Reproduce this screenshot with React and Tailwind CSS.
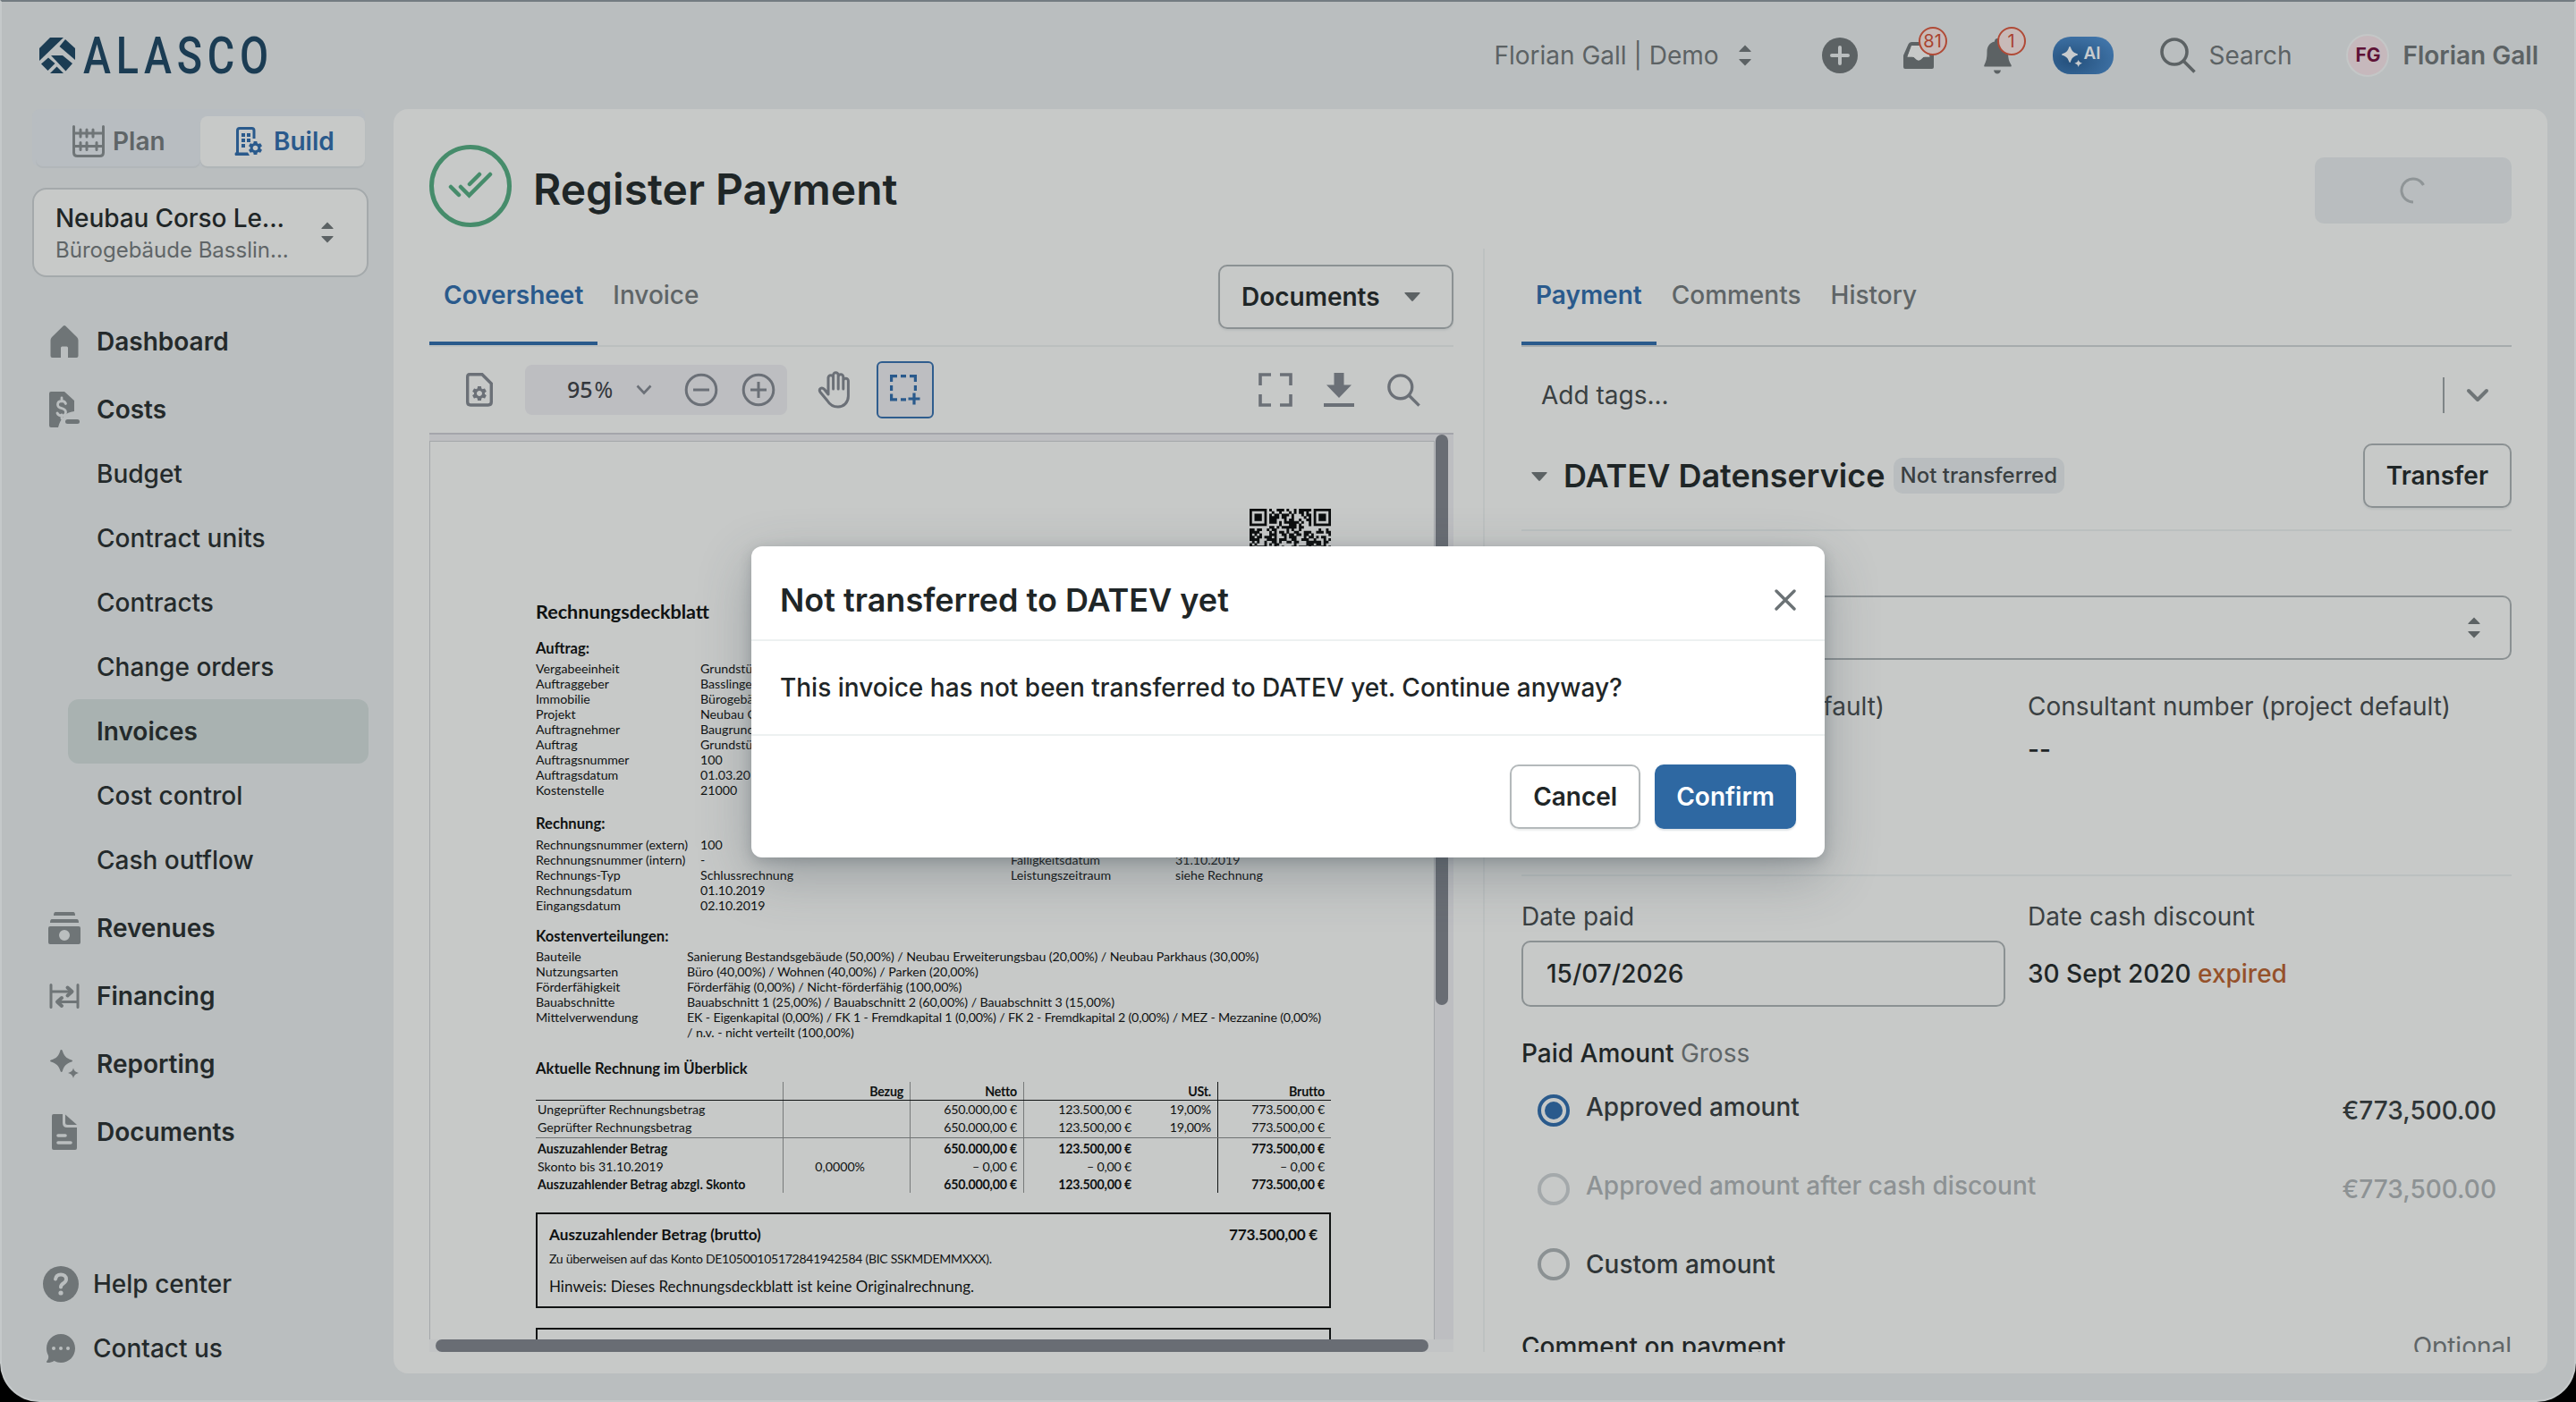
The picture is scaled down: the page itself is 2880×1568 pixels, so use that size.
import { MdSettings } from 'react-icons/md';
import clsx from 'clsx';

const subItems = ['Budget', 'Contract units', 'Contracts', 'Change orders', 'Invoices', 'Cost control', 'Cash outflow'];

const orderRows = [
  ['Vergabeeinheit', 'Grundstückskosten'],
  ['Auftraggeber', 'Basslinger Immobilien GmbH'],
  ['Immobilie', 'Bürogebäude Basslingerstraße'],
  ['Projekt', 'Neubau Corso Leopold'],
  ['Auftragnehmer', 'Baugrund GmbH'],
  ['Auftrag', 'Grundstückskosten'],
  ['Auftragsnummer', '100'],
  ['Auftragsdatum', '01.03.2019'],
  ['Kostenstelle', '21000'],
];

const invoiceRows = [
  ['Rechnungsnummer (extern)', '100', '', ''],
  ['Rechnungsnummer (intern)', '-', 'Fälligkeitsdatum', '31.10.2019'],
  ['Rechnungs-Typ', 'Schlussrechnung', 'Leistungszeitraum', 'siehe Rechnung'],
  ['Rechnungsdatum', '01.10.2019', '', ''],
  ['Eingangsdatum', '02.10.2019', '', ''],
];

const costRows = [
  ['Bauteile', 'Sanierung Bestandsgebäude (50,00%) / Neubau Erweiterungsbau (20,00%) / Neubau Parkhaus (30,00%)'],
  ['Nutzungsarten', 'Büro (40,00%) / Wohnen (40,00%) / Parken (20,00%)'],
  ['Förderfähigkeit', 'Förderfähig (0,00%) / Nicht-förderfähig (100,00%)'],
  ['Bauabschnitte', 'Bauabschnitt 1 (25,00%) / Bauabschnitt 2 (60,00%) / Bauabschnitt 3 (15,00%)'],
  ['Mittelverwendung', 'EK - Eigenkapital (0,00%) / FK 1 - Fremdkapital 1 (0,00%) / FK 2 - Fremdkapital 2 (0,00%) / MEZ - Mezzanine (0,00%)'],
  ['', '/ n.v. - nicht verteilt (100,00%)'],
];

const amountRows = [
  { cells: ['', 'Bezug', 'Netto', '', 'USt.', 'Brutto'], cls: 'h-5 font-bold' },
  { cells: ['Ungeprüfter Rechnungsbetrag', '', '650.000,00 €', '123.500,00 €', '19,00%', '773.500,00 €'], cls: 'h-5 border-t border-[#111414]' },
  { cells: ['Geprüfter Rechnungsbetrag', '', '650.000,00 €', '123.500,00 €', '19,00%', '773.500,00 €'], cls: 'h-[22px]', cellCls: 'pb-0.5' },
  { cells: ['Auszuzahlender Betrag', '', '650.000,00 €', '123.500,00 €', '', '773.500,00 €'], cls: 'h-[22px] border-t border-[#707373] font-bold', cellCls: 'pt-0.5' },
  { cells: ['Skonto bis 31.10.2019', '0,0000%', '– 0,00 €', '– 0,00 €', '', '– 0,00 €'], cls: 'h-5' },
  { cells: ['Auszuzahlender Betrag abzgl. Skonto', '', '650.000,00 €', '123.500,00 €', '', '773.500,00 €'], cls: 'h-5 font-bold' },
];

function SortArrows({ className }) {
  return (
    <svg viewBox="0 0 14 24" className={clsx('h-6 w-3.5 shrink-0 fill-[#5c6264]', className)}>
      <path d="M7 0.5 13.6 7.2q.4.8-.6.8H1q-1 0-.6-.8zM7 23.5l6.6-6.700q.4-.8-.6-.8H1q-1 0-.6.8z" />
    </svg>
  );
}

function Caret({ className }) {
  return (
    <svg viewBox="0 0 18 10" className={clsx('h-2.5 w-[18px] shrink-0 fill-[#5c6264]', className)}>
      <path d="M1.200 0h15.600q1.600 0 .7 1L9.800 9.500q-.8.8-1.600 0L.5 1q-.9-1 .7-1z" />
    </svg>
  );
}

function Logo() {
  return (
    <svg viewBox="0 0 270 44" className="h-11 w-[270px] overflow-visible fill-[#1b3c53]">
      <path d="M0 14 12 2h15L0 28z" />
      <path d="M29 4 40 14v13L22.500 12z" />
      <path d="M13 22h13l11 9-7.500 8.500z" />
      <path d="M10 24.500l7.500 6.500-8 8L2 31.500z" />
      <path d="M19.500 34.500 27 42H12z" />
      <text x="49" y="42" fontSize="56.500" fontWeight="500" letterSpacing="7" textLength="213" lengthAdjust="spacingAndGlyphs" fontFamily="Roboto, sans-serif">
        ALASCO
      </text>
    </svg>
  );
}

function PlanIcon() {
  return (
    <svg viewBox="0 0 36 36" className="size-9" fill="none" stroke="#6f7577" strokeWidth="3" strokeLinecap="round">
      <path d="M1.500 1.500v29q0 4 4 4h25q4 0 4-4v-29M1.500 9h33M1.500 23.500h33" />
      <path d="M9 5v8M16 5v8M23 5v8M9 19.500v8M16 19.500v8M27 19.500v8" />
    </svg>
  );
}

function BuildIcon() {
  return (
    <svg viewBox="0 0 32 32" className="size-8 fill-[#2a5a8c]">
      <path d="M3.500 30V4q0-2.500 2.500-2.500h13.500q2.500 0 2.500 2.500v9" fill="none" stroke="#2a5a8c" strokeWidth="3" />
      <path d="M1 28.500h14l2 3.500H1q-1-1.700 0-3.500z" />
      <path d="M8 7h4v4H8zM14 7h4v4h-4zM8 13h4v4H8zM14 13h4v4h-4zM8 19h4v4H8z" />
      <MdSettings x="14" y="14" size="19" />
    </svg>
  );
}

function HomeIcon() {
  return (
    <svg viewBox="0 0 32 36" className="h-9 w-8 fill-[#6f7577]">
      <path d="M14.500.7q1.500-1.400 3 0L30 13q1.500 1.500 1.500 3.500V34q0 2-2 2H20V25q0-1.500-1.500-1.500h-5Q12 23.500 12 25v11H2.500q-2 0-2-2V16.500q0-2 1.500-3.500z" />
    </svg>
  );
}

function CostsIcon() {
  return (
    <svg viewBox="0 0 34 40" className="h-10 w-[34px]">
      <path d="M2 0h15l11 10v12q-8 1-11 5-5 5-7 13H2q-2 0-2-2V2q0-2 2-2z" fill="#6f7577" />
      <path d="M18.500 13.500q-1-3-4.500-3-4.500.2-4.500 4 0 3 4.500 4.200t4.500 4.300q0 3.800-4.500 4-3.500 0-5-3M14 7v3.500M14 26v4" fill="none" stroke="#babebf" strokeWidth="2.800" strokeLinecap="round" />
      <rect x="18" y="31" width="16" height="5" rx="2.500" fill="#6f7577" />
    </svg>
  );
}

function RevenuesIcon() {
  return (
    <svg viewBox="0 0 36 36" className="size-9 fill-[#6f7577]">
      <path d="M8 0h20q2 0 2 4H6q0-4 2-4zM4 8h28q2 0 2 4H2q0-4 2-4z" />
      <path fillRule="evenodd" d="M2 16h32q2 0 2 2v16q0 2-2 2H2q-2 0-2-2V18q0-2 2-2zm16 4a6 6 0 1 0 0 12 6 6 0 1 0 0-12z" />
    </svg>
  );
}

function FinancingIcon() {
  return (
    <svg viewBox="0 0 34 28" className="h-7 w-[34px]" fill="none" stroke="#6f7577" strokeWidth="3" strokeLinecap="round" strokeLinejoin="round">
      <path d="M2 1.500v25M32 1.500v25M3 9h22M31 20.500H10" />
      <path d="M20.500 4.500 25.500 9l-5 4.500M14 16l-5 4.500 5 4.500" strokeWidth="4" />
    </svg>
  );
}

function Sparkles({ className }) {
  return (
    <svg viewBox="0 0 32 32" className={className}>
      <path d="M12.500 0c.7 0 1 .5 1.300 1.200 2 6 4 8.100 10.300 10.300 1.300.5 1.300 1.500 0 2C17.800 15.700 15.800 17.800 13.800 24c-.4 1.300-1.800 1.300-2.200 0C9.500 17.800 7.500 15.700 1 13.500c-1.300-.5-1.300-1.500 0-2C7.500 9.300 9.500 7.200 11.300 1.200 11.500.5 11.800 0 12.500 0z" />
      <path d="M26 20.500c.9 3 2 4.200 6 5.500-4 1.300-5.100 2.500-6 6-.9-3.500-2-4.700-6-6 4-1.300 5.100-2.500 6-5.500z" />
    </svg>
  );
}

function DocumentsIcon() {
  return (
    <svg viewBox="0 0 28 40" className="h-10 w-7">
      <path d="M2 0h10v10q0 5 5 5h11v23q0 2-2 2H2q-2 0-2-2V2q0-2 2-2z" fill="#6f7577" />
      <path d="M15 0.500 28 12H17.500Q15 12 15 9.500z" fill="#6f7577" />
      <path d="M7 24h8M7 32h14" stroke="#babebf" strokeWidth="3.600" strokeLinecap="round" />
    </svg>
  );
}

function HelpIcon() {
  return (
    <svg viewBox="0 0 40 40" className="size-10">
      <circle cx="20" cy="20" r="20" fill="#6f7577" />
      <path d="M14 14.500c.6-3.500 3-5 6-5 3.500 0 6 2 6 5.200 0 4.800-6 4.300-6 8.800" fill="none" stroke="#babebf" strokeWidth="4" strokeLinecap="round" />
      <circle cx="20" cy="30" r="2.600" fill="#babebf" />
    </svg>
  );
}

function ChatIcon() {
  return (
    <svg viewBox="0 0 32 32" className="size-8">
      <path d="M16 0c9 0 16 7 16 16s-7 16-16 16c-3 0-5-.8-7.500-2C6 31.500 4 32 1.500 32 0 32-.4 31 .5 30c1.500-2 2-3.500 1.500-6C.7 21.500 0 19 0 16 0 7 7 0 16 0z" fill="#6f7577" />
      <g fill="#babebf">
        <circle cx="8" cy="16" r="2" />
        <circle cx="16" cy="16" r="2" />
        <circle cx="24" cy="16" r="2" />
      </g>
    </svg>
  );
}

function SearchIcon({ className, strokeWidth = 4 }) {
  return (
    <svg viewBox="0 0 40 40" className={className} fill="none" strokeWidth={strokeWidth}>
      <circle cx="16" cy="16" r="14" />
      <path d="M26 26 38.500 38.500" />
    </svg>
  );
}

function HandIcon({ className }) {
  return (
    <svg viewBox="0 0 38 42" className={className} fill="none" stroke="#6b7077" strokeWidth="3" strokeLinecap="round" strokeLinejoin="round">
      <path d="M12 26V7.500a2.800 2.800 0 0 1 5.600 0V20M17.600 20V4.500a2.800 2.800 0 0 1 5.600 0V20M23.200 20V6.500a2.800 2.800 0 0 1 5.600 0V20M28.800 20v-9a2.800 2.800 0 0 1 5.600 0v17c0 7-5 12-11.500 12-5.500 0-9-2-12-7L3 23.500c-2-3.500 1.500-6 4.500-3.200L12 26" />
    </svg>
  );
}

const navItems = [
  { label: 'Dashboard', icon: HomeIcon },
  { label: 'Costs', icon: CostsIcon, children: subItems },
  { label: 'Revenues', icon: RevenuesIcon },
  { label: 'Financing', icon: FinancingIcon },
  { label: 'Reporting', icon: () => <Sparkles className="size-8 fill-[#6f7577]" /> },
  { label: 'Documents', icon: DocumentsIcon },
];

function Header() {
  return (
    <header className="flex h-[120px] shrink-0 items-center pr-10 pl-[42px] text-[#5c6264]">
      <Logo />
      <span className="ml-auto">Florian Gall | Demo</span>
      <SortArrows className="ml-[22px]" />
      <svg viewBox="0 0 40 40" className="ml-[79px] size-10">
        <circle cx="20" cy="20" r="20" fill="#5c6264" />
        <path d="M20 11v18M11 20h18" stroke="#babebf" strokeWidth="4" strokeLinecap="round" />
      </svg>
      <div className="relative ml-[51px]">
        <svg viewBox="0 0 34 30" className="h-[30px] w-[34px]">
          <path fillRule="evenodd" fill="#5c6264" d="M9 0h16q2.500 0 3.500 2.500L34 15v13q0 2-2 2H2q-2 0-2-2V15L5.500 2.500Q6.500 0 9 0zm0 4L4.500 16.500H10q2 0 3.500 2t3.500 2 3.500-2 3.500-2h5.500L25 4z" />
          <path fill="#c7c9c8" d="M9.500 4 4.500 16.500H10q2 0 3.500 2t3.500 2 3.500-2 3.500-2h5.500L24.500 4z" />
        </svg>
        <span className="absolute -top-[17px] left-[17px] flex size-8 items-center justify-center rounded-full border-2 border-[#b04a36] bg-[#c8bab8] text-xl leading-none text-[#a8432f]">81</span>
      </div>
      <div className="relative ml-[54px]">
        <svg viewBox="0 0 34 42" className="h-[42px] w-[34px] fill-[#5c6264]">
          <path d="M17 2c2 0 3 1.500 3 3.500 6 1 9 5.500 9 11.500 0 7 1 10.500 3.500 14.500.5 1.500.5 2-1 2h-28c-1.500 0-1.500-.5-1-2C4.500 27.500 5.500 24 5.500 17c0-6 3-10.500 8.500-11.500C14 3.500 15 2 17 2zM13 37.500h8q-.8 4-4 4t-4-4z" />
        </svg>
        <span className="absolute -top-[11px] left-[17px] flex size-8 items-center justify-center rounded-full border-2 border-[#b04a36] bg-[#c8bab8] text-xl leading-none text-[#a8432f]">1</span>
      </div>
      <div className="ml-[45px] flex h-[42px] w-[68px] items-start rounded-[20px] bg-radial-[at_30%_65%] from-[#24507c] to-[#4378ad] to-90% pt-[11px] pl-2.5">
        <Sparkles className="h-[23px] w-[23px] fill-[#c7cbce]" />
        <span className="ml-0.5 text-[19px] leading-[15px] font-semibold text-[#c7cbce]">AI</span>
      </div>
      <SearchIcon className="ml-[52px] size-10 stroke-[#5c6264]" strokeWidth={3.600} />
      <span className="ml-[15px]">Search</span>
      <div className="ml-[61px] flex size-12 items-center justify-center rounded-full border-2 border-[#c4c7c7] bg-[#c6b8bc] text-[21px] font-bold text-[#5f1236]">FG</div>
      <span className="ml-[15px] font-semibold">Florian Gall</span>
    </header>
  );
}

function Sidebar() {
  return (
    <aside className="flex w-[438px] shrink-0 flex-col">
      <div className="ml-[34px] flex w-[372px] rounded-lg bg-[#b8bdc1] pt-2 pl-1 font-semibold">
        <div className="flex h-14 w-[184px] items-center rounded-lg pl-[41px] text-[#5f6567] shadow-[0_2px_0_#b1b6b9]">
          <PlanIcon />
          <span className="ml-[9px]">Plan</span>
        </div>
        <div className="flex h-14 w-[184px] items-center rounded-lg bg-[#c7c9c8] pl-[38px] text-[#2a5a8c] shadow-[0_2px_1px_#b0b5b7]">
          <BuildIcon />
          <span className="ml-3">Build</span>
        </div>
      </div>

      <div className="mt-6 ml-[34px] flex h-[100px] w-[376px] items-center rounded-2xl border-2 border-[#a4a9ab] bg-[#c7c9c8] pl-6">
        <div className="w-[297px] pt-[3px] whitespace-nowrap">
          <div className="leading-9 font-medium tracking-[-0.1px] text-[#1f2627]">Neubau Corso Le...</div>
          <div className="text-2xl leading-9 text-[#5f6567]">Bürogebäude Basslin...</div>
        </div>
        <SortArrows />
      </div>

      <nav className="mt-[34px] text-[#242a2b]">
        {navItems.map(({ label, icon: Icon, children }) => (
          <div key={label}>
            <div className="flex h-[76px] items-center font-semibold">
              <div className="mr-3 ml-[46px] flex w-12 justify-center">
                <Icon />
              </div>
              {label}
            </div>
            {children && (
              <div className="-mt-0.5 mb-0.5">
                {children.map((item) => (
                  <div
                    key={item}
                    className={clsx(
                      'ml-[74px] flex h-[72px] w-[336px] items-center rounded-xl pl-8',
                      item === 'Invoices' ? 'bg-[#a9b2b1] font-semibold' : 'font-medium'
                    )}
                  >
                    {item}
                  </div>
                ))}
              </div>
            )}
          </div>
        ))}
      </nav>

      <div className="mt-auto mb-[22px] font-medium text-[#242a2b]">
        <div className="flex h-[72px] items-center pl-[46px]">
          <HelpIcon />
          <span className="ml-4">Help center</span>
        </div>
        <div className="flex h-[72px] items-center pl-[50px]">
          <ChatIcon />
          <span className="ml-5">Contact us</span>
        </div>
      </div>
    </aside>
  );
}

function Tabs({ items }) {
  return (
    <div className="flex gap-px">
      {items.map((item, i) => (
        <div
          key={item}
          className={clsx(
            'h-[108px] border-b-4 px-4 pt-8 leading-10',
            i === 0 ? 'border-[#2a5a8c] font-semibold text-[#2a5a8c]' : 'border-transparent font-medium text-[#5f6567]'
          )}
        >
          {item}
        </div>
      ))}
    </div>
  );
}

function ViewerToolbar() {
  return (
    <div className="flex h-24 items-center">
      <svg viewBox="0 0 30 38" className="ml-[41px] h-[38px] w-[30px] text-[#6b7077]">
        <path d="M4 1.700h14L28.300 12v20.500q0 3.500-3.500 3.500H5q-3.300 0-3.300-3.500V4.500Q1.700 1.700 4 1.700z" fill="none" stroke="#6b7077" strokeWidth="3.400" />
        <MdSettings x="5" y="13" size="20" />
      </svg>
      <div className="ml-9 flex h-14 w-[293px] items-center rounded-lg bg-[#bdbec1] pl-[47px]">
        <span className="w-[77px] font-['Noto_Sans',sans-serif] text-[25px] font-medium text-[#34383d]">
          95<span className="ml-0.5 font-normal">%</span>
        </span>
        <svg viewBox="0 0 18 12" className="h-3 w-[18px]" fill="none" stroke="#6b7077" strokeWidth="2.600">
          <path d="M1.500 1.500 9 9.500l7.500-8" />
        </svg>
        <svg viewBox="0 0 38 38" className="ml-9 size-[38px]" fill="none" stroke="#6b7077" strokeWidth="3">
          <circle cx="19" cy="19" r="16.800" />
          <path d="M10 19h18" />
        </svg>
        <svg viewBox="0 0 38 38" className="ml-[26px] size-[38px]" fill="none" stroke="#6b7077" strokeWidth="3">
          <circle cx="19" cy="19" r="16.800" />
          <path d="M10 19h18M19 10v18" />
        </svg>
      </div>
      <HandIcon className="ml-[34px] h-[42px] w-[38px]" />
      <div className="ml-7 flex size-16 items-center justify-center rounded-md border-2 border-[#2f5d8e] bg-[#bdbec1]">
        <svg viewBox="0 0 34 34" className="size-[34px]" fill="none" stroke="#2a5a8c" strokeWidth="3.200">
          <path d="M1.600 8V1.600H8M12 1.600h6M22 1.600h6.400V8M28.400 12v6M1.600 12v6M1.600 21.500v6.400H8M12 27.900h6M27 20.500v13M20.500 27h13" />
        </svg>
      </div>
      <svg viewBox="0 0 38 38" className="ml-auto size-[38px]" fill="none" stroke="#6b7077" strokeWidth="3.600">
        <path d="M2 14V2h12M24 2h12v12M36 24v12H24M14 36H2V24" />
      </svg>
      <svg viewBox="0 0 34 38" className="ml-[35px] h-[38px] w-[34px] fill-[#6b7077]">
        <path d="M11.500 0h11v13.500H31L17 28 3 13.500h8.500zM0 34h34v4H0z" />
      </svg>
      <SearchIcon className="mr-[37px] ml-[37px] size-[37px] stroke-[#6b7077]" strokeWidth={3.600} />
    </div>
  );
}

const QR_SIZE = 33;

// Square code block with three finder marks and a fixed pseudo random fill
function QrCode() {
  const cells = [];
  let seed = 20191031;
  for (let y = 0; y < QR_SIZE; y++) {
    for (let x = 0; x < QR_SIZE; x++) {
      seed = (seed * 1103515245 + 12345) % 2147483648;
      const inFinder = (x < 8 && y < 8) || (x > 24 && y < 8) || (x < 8 && y > 24);
      if (!inFinder && (seed >> 12) % 100 < 52) cells.push(`M${x} ${y}h1.050v1.050h-1.050z`);
    }
  }
  return (
    <svg viewBox="0 0 33 33" className="size-[91px] fill-[#0c0e0e]">
      <path d={cells.join('')} />
      {[[0, 0], [26, 0], [0, 26]].map(([x, y]) => (
        <g key={`${x}-${y}`}>
          <rect x={x + 0.5} y={y + 0.5} width="6" height="6" fill="none" stroke="#0c0e0e" />
          <rect x={x + 2} y={y + 2} width="3" height="3" />
        </g>
      ))}
    </svg>
  );
}

function SheetHeading({ className, children }) {
  return <h3 className={clsx('text-[16.600px] leading-[22px] font-bold', className)}>{children}</h3>;
}

function Coversheet() {
  return (
    <div className="w-[1124px] shrink-0 overflow-hidden border-x border-t border-[#a4a7aa] bg-[#c7c9c8] pr-[115px] pl-[118px] font-[Lato,sans-serif] text-[14.200px] leading-[17px] whitespace-nowrap text-[#0f1212]">
      <div className="flex h-[176px] justify-end pt-[75px]">
        <QrCode />
      </div>
      <h2 className="text-[21.600px] leading-7 font-bold">Rechnungsdeckblatt</h2>

      <SheetHeading className="mt-4">Auftrag:</SheetHeading>
      <div className="mt-[3px]">
        {orderRows.map(([label, value]) => (
          <div key={label} className="flex">
            <span className="w-[184px]">{label}</span>
            <span>{value}</span>
          </div>
        ))}
      </div>

      <SheetHeading className="mt-[18px]">Rechnung:</SheetHeading>
      <div className="mt-1">
        {invoiceRows.map(([label, value, label2, value2]) => (
          <div key={label} className="flex">
            <span className="w-[184px]">{label}</span>
            <span className="w-[347px]">{value}</span>
            <span className="w-[184px]">{label2}</span>
            <span>{value2}</span>
          </div>
        ))}
      </div>

      <SheetHeading className="mt-[15px]">Kostenverteilungen:</SheetHeading>
      <div className="mt-[3px]">
        {costRows.map(([label, value]) => (
          <div key={value} className="flex h-[17px]">
            <span className="w-[169px] shrink-0">{label}</span>
            <span className={label === 'Mittelverwendung' ? 'tracking-[-0.15px]' : 'tracking-[-0.07px]'}>{value}</span>
          </div>
        ))}
      </div>

      <SheetHeading className="mt-[21px]">Aktuelle Rechnung im Überblick</SheetHeading>
      <div className="mt-1">
        {amountRows.map(({ cells, cls, cellCls }) => (
          <div key={cells.join()} className={clsx('grid grid-cols-[277px_142px_127px_127px_90px_126px]', cls)}>
            {cells.map((cell, i) => (
              <span
                key={i}
                className={clsx(
                  'flex items-center',
                  cellCls,
                  i === 0 ? 'pl-0.5' : 'justify-end',
                  i > 0 && (cell === '0,0000%' ? 'pr-[50px]' : 'pr-[7px] tracking-[-0.2px]'),
                  i < 3 && 'border-r border-[#777a7a]',
                  i === 4 && 'border-r border-[#111414]'
                )}
              >
                {cell}
              </span>
            ))}
          </div>
        ))}
      </div>

      <div className="mt-[22px] h-[107px] border-2 border-[#111414] px-[13px] pt-[11px]">
        <div className="flex justify-between text-[17.200px] leading-6 font-bold">
          <span>Auszuzahlender Betrag (brutto)</span>
          <span className="tracking-[-0.25px]">773.500,00 €</span>
        </div>
        <div className="mt-[3px] text-[14px] leading-6 tracking-[-0.27px]">Zu überweisen auf das Konto DE10500105172841942584 (BIC SSKMDEMMXXX).</div>
        <div className="mt-[7px] text-[17px] leading-6">Hinweis: Dieses Rechnungsdeckblatt ist keine Originalrechnung.</div>
      </div>
      <div className="mt-[22px] h-[107px] border-2 border-[#111414]" />
    </div>
  );
}

function DocumentPane() {
  return (
    <section className="flex h-[1234px] w-[1145px] shrink-0 flex-col">
      <div className="flex h-[110px] shrink-0 justify-between border-b-2 border-[#bbbfbf]">
        <Tabs items={['Coversheet', 'Invoice']} />
        <button className="mt-[18px] flex h-[72px] w-[263px] items-center justify-between rounded-[10px] border-2 border-[#8b9193] pr-[35px] pl-6 font-semibold text-[#1f2627] shadow-[0_2px_2px_#bbbebe]">
          Documents
          <Caret />
        </button>
      </div>
      <ViewerToolbar />
      <div className="flex min-h-0 flex-1 flex-col border-t-2 border-[#a4a5ab] bg-[#bdbec1]">
        <div className="flex min-h-0 flex-1">
          <div className="flex overflow-hidden pt-[7px]">
            <Coversheet />
          </div>
          <div className="ml-px h-[638px] w-3.5 rounded-full bg-[#696d74]" />
        </div>
        <div className="h-3.5 bg-[#c2c4c5] pl-[7px]">
          <div className="h-full w-[1110px] rounded-full bg-[#696d74]" />
        </div>
      </div>
    </section>
  );
}

function Radio({ label, amount, checked, disabled }) {
  return (
    <div className={clsx('flex pr-[17px] pl-[18px] font-medium', disabled ? 'text-[#8d9294]' : 'text-[#2f3537]')}>
      <div
        className={clsx(
          'flex size-9 items-center justify-center rounded-full border-4',
          checked ? 'border-[#2a5a8c]' : disabled ? 'border-[#a4a9ab]' : 'border-[#8b9193]'
        )}
      >
        {checked && <div className="size-5 rounded-full bg-[#2a5a8c]" />}
      </div>
      <span className={clsx('ml-[18px] leading-9', amount && '-mt-1')}>{label}</span>
      {amount && <span className="ml-auto leading-9">{amount}</span>}
    </div>
  );
}

function PaymentPane() {
  return (
    <section className="ml-[41px] h-[1234px] w-[1107px] shrink-0 overflow-hidden text-[#3a4042]">
      <div className="border-b-2 border-[#a6abad]">
        <Tabs items={['Payment', 'Comments', 'History']} />
      </div>

      <div className="flex h-[108px] items-center pr-[25px] pl-[22px]">
        Add tags...
        <div className="ml-auto h-10 w-0.5 bg-[#7e8486]" />
        <svg viewBox="0 0 26 16" className="ml-6 h-4 w-[26px]" fill="none" stroke="#6f7577" strokeWidth="4" strokeLinecap="round" strokeLinejoin="round">
          <path d="M3 3l10 10L23 3" />
        </svg>
      </div>

      <div className="flex h-[98px] items-start border-b-2 border-[#bbc0c0] pl-[11px]">
        <Caret className="mt-[32px]" />
        <h2 className="ml-[18px] text-4xl leading-[72px] font-semibold text-[#1f2627]">DATEV Datenservice</h2>
        <span className="mt-4 ml-[9px] flex h-10 items-center rounded-[10px] bg-[#b9bdbf] px-2 text-2xl font-medium text-[#3a4042]">Not transferred</span>
        <button className="ml-auto flex h-[72px] items-center rounded-[10px] border-2 border-[#8b9193] px-6 font-semibold text-[#1f2627] shadow-[0_2px_2px_#bbbebe]">Transfer</button>
      </div>

      <div className="mt-[72px] flex h-[72px] items-center justify-end rounded-[10px] border-2 border-[#8b9193] pr-[33px]">
        <SortArrows />
      </div>

      <div className="mt-[31px] grid h-[211px] grid-cols-2 gap-x-[25px] border-b-2 border-[#bbc0c0]">
        <div className="leading-[42px]">Client number (project default)</div>
        <div>
          <div className="leading-[42px]">Consultant number (project default)</div>
          <div className="mt-1.5 leading-[42px] font-medium text-[#1f2627]">--</div>
        </div>
      </div>

      <div className="mt-6 grid grid-cols-2 gap-x-[25px]">
        <div>
          <div className="leading-[42px]">Date paid</div>
          <div className="mt-1.5 flex h-[74px] items-center rounded-[10px] border-2 border-[#8b9193] pl-[26px] font-medium text-[#1f2627]">15/07/2026</div>
        </div>
        <div>
          <div className="leading-[42px]">Date cash discount</div>
          <div className="mt-1.5 leading-[74px] font-medium text-[#1f2627]">
            30 Sept 2020 <span className="text-[#95512b]">expired</span>
          </div>
        </div>
      </div>

      <div className="mt-8 leading-10 font-medium text-[#1f2627]">
        Paid Amount <span className="font-normal text-[#5f6567]">Gross</span>
      </div>
      <div className="mt-[26px] flex flex-col">
        <Radio label="Approved amount" amount="€773,500.00" checked />
        <div className="mt-[52px]">
          <Radio label="Approved amount after cash discount" amount="€773,500.00" disabled />
        </div>
        <div className="mt-12">
          <Radio label="Custom amount" />
        </div>
      </div>

      <div className="mt-[54px] flex justify-between leading-10 text-[#1f2627]">
        <span className="font-medium">Comment on payment</span>
        <span className="text-[#5f6567]">Optional</span>
      </div>
    </section>
  );
}

function ConfirmDialog() {
  return (
    <div className="absolute inset-0 flex items-start justify-center pt-[609px]">
      <div className="h-[348px] w-[1200px] rounded-xl bg-white text-[#1f2627] shadow-[0_20px_60px_rgba(60,70,80,0.32),0_4px_14px_rgba(60,70,80,0.25)]">
        <div className="flex h-[106px] items-start justify-between border-b-2 border-[#edf1f1] px-8">
          <h2 className="mt-9 text-4xl leading-[48px] font-semibold">Not transferred to DATEV yet</h2>
          <svg viewBox="0 0 24 24" className="mt-12 size-6" fill="none" stroke="#6b7275" strokeWidth="3.400" strokeLinecap="round">
            <path d="M2 2l20 20M22 2 2 22" />
          </svg>
        </div>
        <p className="h-[106px] border-b-2 border-[#edf1f1] px-8 leading-[105px] font-medium">This invoice has not been transferred to DATEV yet. Continue anyway?</p>
        <div className="flex justify-end gap-4 px-8 pt-8 font-semibold">
          <button className="h-[72px] rounded-[10px] border-2 border-[#b4b9bb] px-6 shadow-[0_2px_2px_#eceeee]">Cancel</button>
          <button className="h-[72px] rounded-[10px] bg-[#2e68a2] px-6 text-white shadow-[0_2px_2px_#dfe3e6]">Confirm</button>
        </div>
      </div>
    </div>
  );
}

export default function App() {
  return (
    <div className="bg-black">
      <div className="relative flex h-[1568px] w-[2880px] flex-col overflow-hidden rounded-b-[44px] border-2 border-[#c5c9ca] border-t-[#737c81] bg-[#babebf] font-[Inter,sans-serif] text-[28px]">
        <Header />
        <div className="flex flex-1">
          <Sidebar />
          <main className="h-[1414px] w-[2408px] rounded-2xl bg-[#c7c9c8] pt-10 pl-10">
            <div className="flex h-[116px] items-start pr-10">
              <svg viewBox="0 0 92 92" className="size-[92px]" fill="none" stroke="#468c6b" strokeLinecap="round">
                <circle cx="46" cy="46" r="43.500" strokeWidth="5" />
                <path d="M24 47l9 9M35 47l9.500 9.500L68 33M45 44l11-11" strokeWidth="4.500" />
              </svg>
              <h1 className="ml-6 text-5xl leading-[99px] font-semibold text-[#1f2627]">Register Payment</h1>
              <div className="mt-3.5 ml-auto flex h-[74px] w-[220px] items-center justify-center rounded-[10px] bg-[#b9bdbf]">
                <svg viewBox="0 0 30 30" className="size-[30px]" fill="none" stroke="#8f9597" strokeWidth="3">
                  <path d="M15 28A13 13 0 1 1 26.500 9" />
                </svg>
              </div>
            </div>
            <div className="flex">
              <DocumentPane />
              <div className="ml-[33px] h-[1234px] w-0.5 bg-[#bdc1c1]" />
              <PaymentPane />
            </div>
          </main>
        </div>
        <ConfirmDialog />
      </div>
    </div>
  );
}
